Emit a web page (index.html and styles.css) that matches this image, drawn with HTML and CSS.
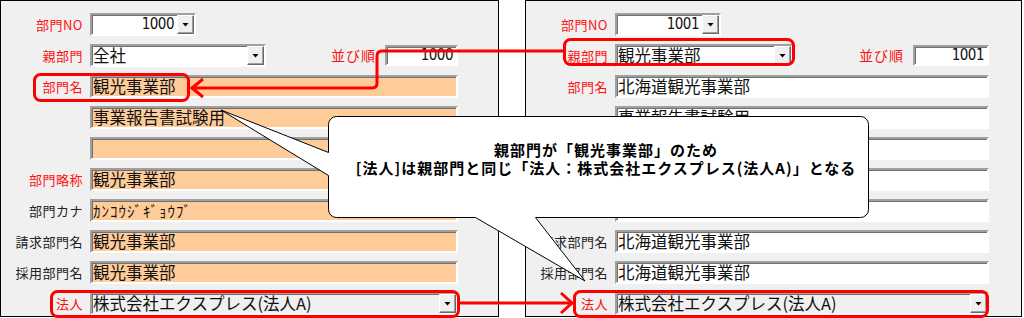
FILE: index.html
```html
<!DOCTYPE html>
<html lang="ja">
<head>
<meta charset="utf-8">
<title>部門設定</title>
<link rel="stylesheet" href="styles.css">
</head>
<body>
<div class="page">
  <section class="panel panel--left">
    <div class="row">
      <span class="lbl req">部門NO</span>
      <div class="field combo combo--no"><span class="val num">1000</span><span class="btn"></span></div>
    </div>
    <div class="row">
      <span class="lbl req">親部門</span>
      <div class="field combo combo--parent-l"><span class="val">全社</span><span class="btn"></span></div>
      <span class="lbl req lbl--order">並び順</span>
      <div class="field field--order num">1000</div>
    </div>
    <div class="row">
      <span class="lbl req">部門名</span>
      <div class="field field--wide orange">観光事業部</div>
    </div>
    <div class="row">
      <span class="lbl"></span>
      <div class="field field--wide orange">事業報告書試験用</div>
    </div>
    <div class="row">
      <span class="lbl"></span>
      <div class="field field--wide orange"></div>
    </div>
    <div class="row">
      <span class="lbl req">部門略称</span>
      <div class="field field--wide orange">観光事業部</div>
    </div>
    <div class="row">
      <span class="lbl">部門カナ</span>
      <div class="field field--wide orange kana">ｶﾝｺｳｼﾞｷﾞｮｳﾌﾞ</div>
    </div>
    <div class="row">
      <span class="lbl">請求部門名</span>
      <div class="field field--wide orange">観光事業部</div>
    </div>
    <div class="row">
      <span class="lbl">採用部門名</span>
      <div class="field field--wide orange">観光事業部</div>
    </div>
    <div class="row">
      <span class="lbl req">法人</span>
      <div class="field field--wide combo gray"><span class="val">株式会社エクスプレス(法人A)</span><span class="btn"></span></div>
    </div>
  </section>

  <section class="panel panel--right">
    <div class="row">
      <span class="lbl req">部門NO</span>
      <div class="field combo combo--no"><span class="val num">1001</span><span class="btn"></span></div>
    </div>
    <div class="row">
      <span class="lbl req">親部門</span>
      <div class="field combo combo--parent-r"><span class="val">観光事業部</span><span class="btn"></span></div>
      <span class="lbl req lbl--order">並び順</span>
      <div class="field field--order field--order-r num">1001</div>
    </div>
    <div class="row">
      <span class="lbl req">部門名</span>
      <div class="field field--wide">北海道観光事業部</div>
    </div>
    <div class="row">
      <span class="lbl"></span>
      <div class="field field--wide">事業報告書試験用</div>
    </div>
    <div class="row">
      <span class="lbl"></span>
      <div class="field field--wide"></div>
    </div>
    <div class="row">
      <span class="lbl req">部門略称</span>
      <div class="field field--wide"></div>
    </div>
    <div class="row">
      <span class="lbl">部門カナ</span>
      <div class="field field--wide"></div>
    </div>
    <div class="row">
      <span class="lbl">請求部門名</span>
      <div class="field field--wide">北海道観光事業部</div>
    </div>
    <div class="row">
      <span class="lbl">採用部門名</span>
      <div class="field field--wide">北海道観光事業部</div>
    </div>
    <div class="row">
      <span class="lbl req">法人</span>
      <div class="field field--wide combo gray"><span class="val">株式会社エクスプレス(法人A)</span><span class="btn"></span></div>
    </div>
  </section>

  <svg class="overlay" width="1024" height="318" viewBox="0 0 1024 318" xmlns="http://www.w3.org/2000/svg">
    <g class="hl">
      <rect x="34.5" y="74.5" width="154" height="26" rx="6"/>
      <rect x="51.5" y="291.5" width="407" height="25" rx="6"/>
      <rect x="564.5" y="39.5" width="229" height="25" rx="6"/>
      <rect x="574.5" y="291.5" width="413" height="25" rx="6"/>
      <path d="M191 88 H372 Q377 88 377 83 V56 Q377 51 382 51 H563"/>
      <path d="M203 79 L192 88 L203 97"/>
      <path d="M460 303 H571"/>
      <path d="M561 293 L572 303 L561 313"/>
    </g>
    <path class="bubble" d="M336.5 116.5 H860.5 A8 8 0 0 1 868.5 124.5 V209.5 A8 8 0 0 1 860.5 217.5 H535.5 L585 281 L475.5 217.5 H336.5 A8 8 0 0 1 328.5 209.5 V175.5 L221 110 L328.5 152.5 V124.5 A8 8 0 0 1 336.5 116.5 Z"/>
  </svg>
  <div class="callout-text">
    <p>親部門が「観光事業部」のため</p>
    <p>[法人]は親部門と同じ「法人：株式会社エクスプレス(法人A)」となる</p>
  </div>
</div>
</body>
</html>
```

FILE: styles.css
```css
body {
  margin: 0;
  background: #fff;
  font-family: "Noto Sans CJK JP", "Noto Sans", sans-serif;
}

.page {
  position: relative;
  width: 1024px;
  height: 318px;
  display: flex;
  gap: 26px;
  overflow: hidden;
  background: #fff;
}

.panel {
  box-sizing: border-box;
  height: 317px;
  border: 1px solid #000;
  background: #f0f0f0;
  padding: 12px 40px 0 0;
  display: flex;
  flex-direction: column;
  gap: 8px;
  flex: none;
}

.panel--left {
  width: 499px;
}

.panel--right {
  width: 497px;
  padding-right: 32px;
}

.row {
  display: flex;
  align-items: center;
  height: 23px;
}

.lbl {
  flex: none;
  width: 83px;
  margin-right: 6px;
  box-sizing: border-box;
  padding-right: 1px;
  text-align: right;
  font-size: 13px;
  letter-spacing: 0.5px;
  line-height: 23px;
  color: #222;
  white-space: nowrap;
}

.lbl.req {
  color: #ff1010;
}

.lbl--order {
  width: auto;
  margin-left: auto;
  margin-right: 8px;
  font-size: 14px;
  letter-spacing: 1px;
}

.field {
  box-sizing: border-box;
  height: 23px;
  border: 2px solid;
  border-color: #a0a0a0 #fff #fff #a0a0a0;
  box-shadow: inset 1px 1px 0 #707070;
  background: #fff;
  font-size: 16.5px;
  line-height: 19px;
  padding: 0 2px 0 1px;
  color: #111;
  white-space: nowrap;
}

.field--wide {
  flex: 1;
}

.orange {
  background: #ffcc99;
}

.gray {
  background: #f0f0f0;
}

.kana {
  letter-spacing: 1px;
  font-size: 15px;
}

.num {
  text-align: right;
  font-family: "DejaVu Sans", "Liberation Sans", sans-serif;
  font-stretch: condensed;
  font-size: 15px;
  letter-spacing: -0.5px;
  padding-right: 3px;
}

.field--order {
  width: 73px;
  height: 21px;
  line-height: 17px;
}

.field--order-r {
  width: 76px;
}

.combo {
  display: flex;
  padding: 0;
}

.combo .val {
  flex: 1;
  padding-left: 1px;
}

.combo .val.num {
  padding-right: 3px;
}

.combo--no {
  width: 106px;
}

.combo--parent-l {
  width: 176px;
}

.combo--parent-r {
  width: 178px;
}

.btn {
  flex: none;
  box-sizing: border-box;
  width: 17px;
  height: 19px;
  border: 1px solid;
  border-color: #fff #696969 #696969 #fff;
  box-shadow: inset -1px -1px 0 #a0a0a0;
  background: #f0f0f0;
  display: flex;
  align-items: center;
  justify-content: center;
}

.btn::after {
  content: "";
  width: 7px;
  height: 4px;
  background: #000;
  clip-path: polygon(0 0, 100% 0, 50% 100%);
}

.overlay {
  position: absolute;
  left: 0;
  top: 0;
  pointer-events: none;
}

.hl rect,
.hl path {
  fill: none;
  stroke: #ff0000;
  stroke-width: 3;
}

.bubble {
  fill: #fff;
  stroke: #000;
  stroke-width: 1;
}

.callout-text {
  position: absolute;
  left: 336px;
  top: 141px;
  width: 540px;
  text-align: center;
  font-size: 15px;
  font-weight: bold;
  letter-spacing: 1px;
  line-height: 18px;
  color: #000;
}

.callout-text p {
  margin: 0;
}
```
